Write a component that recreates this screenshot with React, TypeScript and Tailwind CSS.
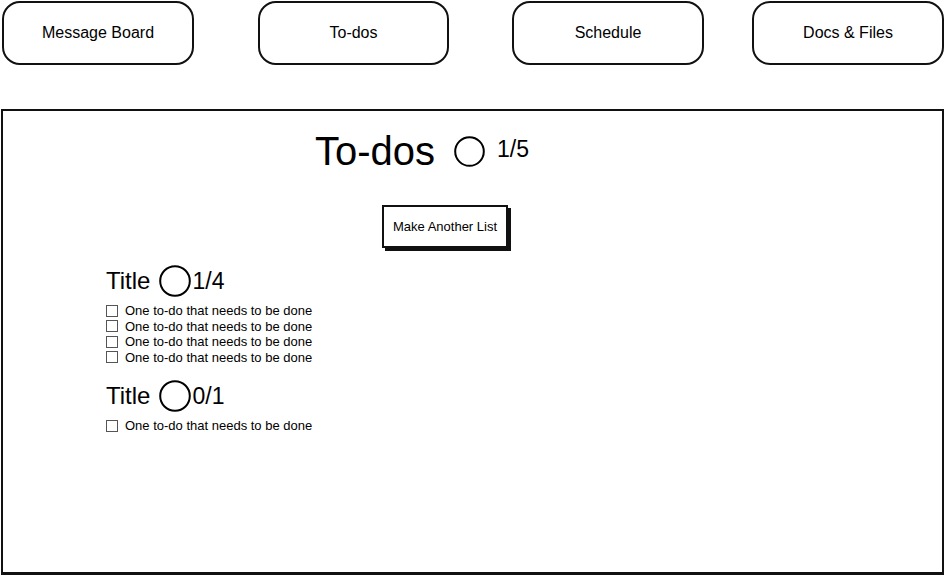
import React from 'react';

const navItems = [
    { label: 'Message Board', className: 'ml-[2px] w-[192px]' },
    { label: 'To-dos', className: 'ml-[64px] w-[191px]' },
    { label: 'Schedule', className: 'ml-[63px] w-[192px]' },
    { label: 'Docs & Files', className: 'ml-[48px] w-[192px]' },
];

function Circle({ size }: { size: number }) {
    return (
        <svg width={size} height={size} viewBox={`0 0 ${size} ${size}`} className="shrink-0">
            <circle cx={size / 2} cy={size / 2} r={size / 2 - 1.2} fill="none" stroke="#000" strokeWidth="2" />
        </svg>
    );
}

function TodoItem({ text }: { text: string }) {
    return (
        <div className="flex items-center h-[15.5px]">
            <span className="w-[12px] h-[12px] border border-[#555] bg-white shrink-0" />
            <span className="ml-[7px] text-[13px] leading-none text-black">{text}</span>
        </div>
    );
}

function TodoList({ count, items }: { count: string; items: string[] }) {
    return (
        <div className="flex flex-col">
            <div className="flex items-center h-[32px]">
                <span className="text-[24px] leading-none">Title</span>
                <span className="ml-[9px]"><Circle size={32} /></span>
                <span className="ml-[1px] text-[23px] leading-none">{count}</span>
            </div>
            <div className="mt-[6px] flex flex-col">
                {items.map((t, i) => (
                    <TodoItem key={i} text={t} />
                ))}
            </div>
        </div>
    );
}

export default function App() {
    const todo = 'One to-do that needs to be done';

    return (
        <div className="w-[945px] h-[576px] bg-white text-black overflow-hidden" style={{ fontFamily: '"Liberation Sans", Arial, sans-serif' }}>
            <nav className="flex pt-[1px]">
                {navItems.map(item => (
                    <div
                        key={item.label}
                        className={`${item.className} h-[64px] rounded-[18px] border-2 border-[#111] flex items-center justify-center text-[16px]`}
                    >
                        {item.label}
                    </div>
                ))}
            </nav>

            <main className="mt-[44px] ml-[1px] w-[943px] h-[466px] border-2 border-b-[3px] border-[#111] flex flex-col">
                <div className="flex items-center ml-[312px] mt-[20px] h-[40px]">
                    <h1 className="text-[40px] leading-none">To-dos</h1>
                    <span className="ml-[19px]"><Circle size={31} /></span>
                    <span className="ml-[12px] text-[23px] leading-none -mt-[4px]">1/5</span>
                </div>

                <div className="ml-[379px] mt-[34px]">
                    <button className="w-[126px] h-[43px] border-2 border-[#111] bg-white shadow-[3px_3px_0_#111] text-[13px]">
                        Make Another List
                    </button>
                </div>

                <div className="ml-[103px] mt-[17px] flex flex-col gap-[15px]">
                    <TodoList count="1/4" items={[todo, todo, todo, todo]} />
                    <TodoList count="0/1" items={[todo]} />
                </div>
            </main>
        </div>
    );
}
